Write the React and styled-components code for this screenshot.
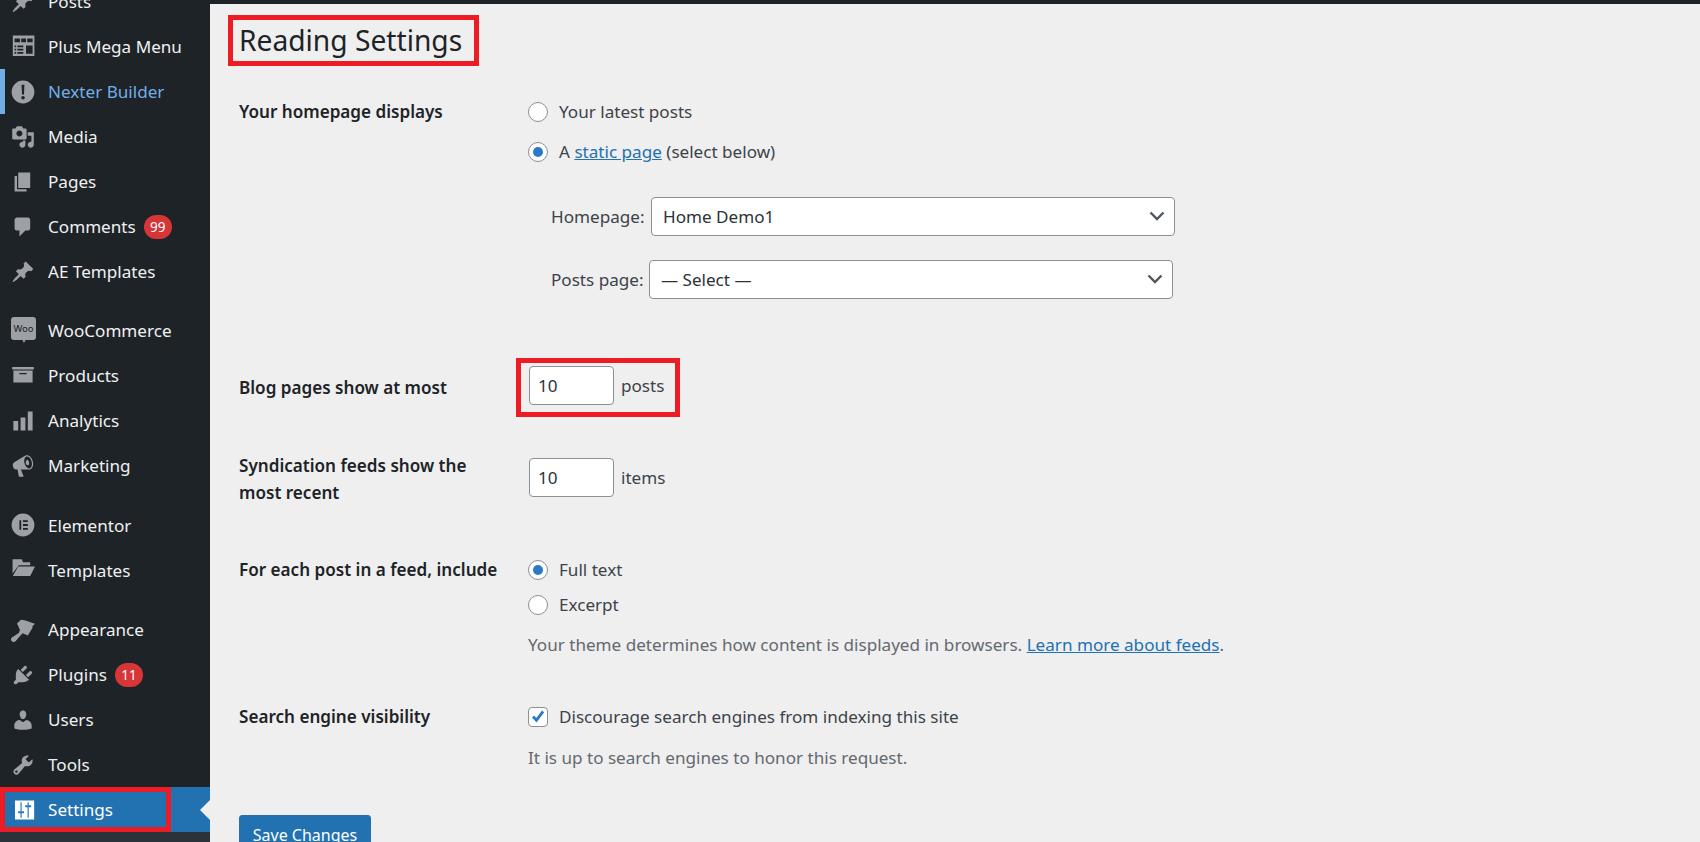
import React from 'react';
import styled, { createGlobalStyle } from 'styled-components';

const GlobalStyle = createGlobalStyle`
  html, body {
    margin: 0;
    height: 842px;
    overflow: hidden;
    background: #efefef;
    font-family: "Noto Sans", "Open Sans", sans-serif;
    font-size: 17.1px;
    color: #3c434a;
  }
`;

const ICONS = {
  post: <path d="M10.44 3.02l1.82-1.82 6.36 6.35-1.83 1.82c-1.05-.68-2.48-.57-3.41.36l-.75.75c-.92.93-1.04 2.35-.35 3.41l-1.83 1.82-2.41-2.41-2.8 2.79c-.42.42-3.38 2.71-3.8 2.29s1.86-3.39 2.28-3.81l2.79-2.79L4.1 9.36l1.83-1.82c1.05.69 2.48.57 3.4-.36l.75-.75c.93-.92 1.05-2.35.36-3.41z" />,
  mega: <path fillRule="evenodd" d="M1.500 0.500h18v17h-18v-17zM3 3v3h4.500V3H3zm5.500 0v3h4V3h-4zm5 0v3H18V3h-4.500zM3 8.800v1.400h1.300V8.800H3zm2.300 0v1.400h5V8.800h-5zM3 11.500v1.400h1.300v-1.400H3zm2.300 0v1.400h5v-1.400h-5zM3 14.200v1.400h1.300v-1.400H3zm2.300 0v1.400h5v-1.400h-5zM12.500 8.800v6.800H18V8.800h-5.500z" />,
  warning: <path fillRule="evenodd" d="M10 0.500a9.500 9.500 0 1 0 0 19 9.500 9.500 0 0 0 0-19zM8.800 4h2.400l-.4 8H9.200L8.800 4zM10 13.300a1.500 1.500 0 1 1 0 3 1.500 1.500 0 0 1 0-3z" />,
  media: <path d="M13 11V4c0-.55-.45-1-1-1h-1.670L9 1H5L3.670 3H2c-.55 0-1 .45-1 1v7c0 .55.45 1 1 1h10c.55 0 1-.45 1-1zM7 4.500c1.380 0 2.500 1.120 2.500 2.500S8.380 9.500 7 9.500 4.500 8.380 4.500 7 5.620 4.500 7 4.500zM14 6h5v10.500c0 1.380-1.120 2.500-2.500 2.500S14 17.880 14 16.500s1.120-2.500 2.500-2.500c.17 0 .34.02.5.05V9h-3V6zm-4 8.050V13h2v3.500c0 1.380-1.120 2.500-2.500 2.500S7 17.880 7 16.500 8.120 14 9.500 14c.17 0 .34.02.5.05z" />,
  page: <path d="M6 15V2h10v13H6zm-1 1h8v2H3V5h2v11z" />,
  comments: <path d="M5 2h9c1.100 0 2 .9 2 2v7c0 1.100-.9 2-2 2h-2l-5 5v-5H5c-1.100 0-2-.9-2-2V4c0-1.100.9-2 2-2z" />,
  products: <path fillRule="evenodd" d="M19 2.500v2H1v-2h18zM2 5.500h16v10H2v-10zm11 3v-1H7v1h6z" />,
  chart: <path d="M18 18V2h-4v16h4zm-6 0V7H8v11h4zm-6 0v-8H2v8h4z" />,
  megaphone: <path d="M18.150 5.940c.46 1.620.38 3.220-.02 4.480-.42 1.280-1.260 2.180-2.300 2.480-.16.06-.26.06-.4.06-.06.02-.12.02-.18.02-.06.02-.14.02-.22.02H8.230l2.220 5.500c.02.14-.06.26-.14.34-.08.1-.24.16-.34.16H6.950c-.1 0-.26-.06-.34-.16-.08-.08-.16-.2-.14-.34l-1-5.500H4.250l-.02-.02c-.5.06-1.080-.18-1.540-.62s-.88-1.080-1.060-1.880c-.24-.8-.2-1.560-.02-2.200.18-.62.58-1.080 1.060-1.300l.02-.02 9-5.400c.1-.06.18-.1.24-.16.06-.04.14-.08.24-.12.16-.08.28-.12.5-.18 1.040-.3 2.240.1 3.220 1 .98.88 1.800 2.240 2.260 3.860zm-2.580 5.980h-.02c.4-.1.74-.34 1.040-.7.58-.7.86-1.760.86-3.040 0-.64-.1-1.300-.28-1.980-.34-1.360-1.020-2.500-1.780-3.240s-1.680-1.100-2.460-.88c-.82.22-1.400.96-1.700 2-.32 1.040-.28 2.360.06 3.720.38 1.360 1 2.500 1.800 3.240.78.74 1.620 1.100 2.480.88zm-2.540-7.080c.22-.04.42-.02.62.04.38.16.76.48 1.020 1s.42 1.200.42 1.780c0 .3-.04.56-.12.8-.18.48-.44.84-.86.94-.34.1-.8-.06-1.140-.4-.26-.26-.48-.62-.58-1.080-.12-.46-.14-.94-.02-1.400.18-.7.5-1.140.84-1.280z" />,
  elementor: <path fillRule="evenodd" d="M10 0.500a9.500 9.500 0 1 0 0 19 9.500 9.500 0 0 0 0-19zM7 6h1.500v8H7V6zm3 0h4v1.500h-4V6zm0 3.250h4v1.500h-4v-1.500zm0 3.250h4V14h-4v-1.500z" />,
  folder: <path d="M1.300 1H9l1 2.500h6V6H6.500l-5.200 7V1zM6 7h14l-4 8H1.500L6 7z" />,
  appearance: <path d="M5 4.500L8.300 1.500c4 .2 7 2.200 11.700 3.200l-2.500 2.500.7.5L14 14.500 9.800 12.800 7.500 15l-3.500 4.200c-1 1-2.500 1-3.500 0-.9-1-.6-2.300.3-3L6.500 12.500l1-2.500L5 4.500z" />,
  plugins: <path d="M13.110 4.360L9.870 7.600 8 5.730l3.240-3.240c.35-.34 1.050-.2 1.560.32.52.51.66 1.210.31 1.550zm-8 1.770l.91-1.120 9.010 9.010-1.190.84c-.71.71-2.630 1.160-3.820 1.160H6.140L4.900 17.260c-.59.59-1.540.59-2.120 0-.59-.58-.59-1.530 0-2.120l1.240-1.240v-3.880c0-1.130.4-3.190 1.090-3.890zm7.260 3.970l3.240-3.240c.34-.35 1.040-.21 1.550.31.52.51.66 1.210.31 1.550l-3.240 3.250z" />,
  users: <path d="M10 9.250c-2.270 0-2.730-3.440-2.730-3.440C7 4.020 7.820 2 9.970 2c2.160 0 2.980 2.020 2.710 3.810 0 0-.41 3.440-2.680 3.440zm0 2.570L12.720 10c2.390 0 4.520 2.330 4.520 4.530v2.490s-3.650 1.130-7.240 1.130c-3.650 0-7.240-1.130-7.240-1.130v-2.490c0-2.250 1.940-4.480 4.470-4.480z" />,
  tools: <path d="M16.680 9.770c-1.340 1.340-3.300 1.670-4.950.99l-5.410 6.520c-.99.99-2.590.99-3.580 0s-.99-2.590 0-3.570l6.520-5.420c-.68-1.650-.35-3.610.99-4.950 1.280-1.280 3.120-1.620 4.720-1.060l-2.890 2.890 2.820 2.820 2.860-2.870c.53 1.580.18 3.390-1.080 4.650zM3.810 16.210c.4.39 1.040.39 1.430 0 .4-.4.4-1.040 0-1.430-.39-.4-1.030-.4-1.430 0-.39.39-.39 1.030 0 1.430z" />,
  settings: (
    <>
      <path d="M3.300 2h16v16h-16z" />
      <path fill="#2a7bc4" d="M7.900 3.500h1v13h-1zM5.900 11h5v1.800h-5zM13.800 3.500h1v13h-1zM11.800 6h5v1.800h-5z" />
    </>
  ),
};

const WooIcon = () => (
  <svg width="25" height="27" viewBox="0 0 25 27">
    <path fill="currentColor" d="M3 0h19a3 3 0 0 1 3 3v17a3 3 0 0 1-3 3h-7.500l-1.500 3-1.500-3H3a3 3 0 0 1-3-3V3a3 3 0 0 1 3-3z" />
    <text x="12.500" y="15" textAnchor="middle" fontSize="9.500" fontFamily="Noto Sans, sans-serif" fill="#1d2327">Woo</text>
  </svg>
);

const MENU = [
  { label: 'Posts', icon: 'post' },
  { label: 'Plus Mega Menu', icon: 'mega' },
  { label: 'Nexter Builder', icon: 'warning', current: true },
  { label: 'Media', icon: 'media' },
  { label: 'Pages', icon: 'page' },
  { label: 'Comments', icon: 'comments', badge: 99 },
  { label: 'AE Templates', icon: 'post', gapAfter: true },
  { label: 'WooCommerce', icon: 'woo' },
  { label: 'Products', icon: 'products' },
  { label: 'Analytics', icon: 'chart' },
  { label: 'Marketing', icon: 'megaphone', gapAfter: true },
  { label: 'Elementor', icon: 'elementor' },
  { label: 'Templates', icon: 'folder', gapAfter: true },
  { label: 'Appearance', icon: 'appearance' },
  { label: 'Plugins', icon: 'plugins', badge: 11 },
  { label: 'Users', icon: 'users' },
  { label: 'Tools', icon: 'tools' },
  { label: 'Settings', icon: 'settings', active: true },
];

const Page = styled.div`
  display: flex;
  height: 842px;
  overflow: hidden;
`;

const Sidebar = styled.nav`
  width: 210px;
  flex: none;
  height: 842px;
  overflow: hidden;
  background: #1d2327;
  display: flex;
  flex-direction: column;
`;

const Menu = styled.ul`
  list-style: none;
  margin: -21px 0 0;
  padding: 0;
`;

const MenuItem = styled.li`
  position: relative;
  height: 45px;
  display: flex;
  align-items: center;
  margin-bottom: ${p => (p.$gapAfter ? '14.4px' : '0')};
  background: ${p => (p.$active ? '#2271b1' : 'transparent')};
  color: ${p => (p.$current ? '#72aee6' : p.$active ? '#fff' : '#f0f0f1')};
  box-shadow: ${p => (p.$current ? 'inset 5px 0 0 #72aee6' : 'none')};
`;

const IconSlot = styled.span`
  width: 48px;
  flex: none;
  display: flex;
  justify-content: center;
  padding-right: 2px;
  box-sizing: border-box;
  color: ${p => (p.$active ? '#fff' : '#9da1a6')};
  svg { display: block; overflow: visible; }
`;

const MenuLabel = styled.span`
  white-space: nowrap;
`;

const Badge = styled.span`
  margin-left: 8px;
  min-width: 28px;
  height: 24px;
  border-radius: 12px;
  background: #d63638;
  color: #fff;
  font-size: 13.500px;
  line-height: 24px;
  text-align: center;
`;

const ActiveFrame = styled.span`
  position: absolute;
  left: 0;
  top: 0;
  width: 171px;
  height: 45px;
  box-sizing: border-box;
  border: 5px solid #ed1c24;
`;

const ActiveArrow = styled.span`
  position: absolute;
  right: 0;
  top: 50%;
  margin-top: -10px;
  border: 10px solid transparent;
  border-left: 0;
  border-right-color: #f0f0f1;
`;

const SubmenuFill = styled.div`
  flex: 1;
  background: #2c3338;
`;

const Main = styled.main`
  flex: 1;
  border-top: 4px solid #1d2327;
  padding: 11px 0 0 18px;
`;

const TitleFrame = styled.div`
  display: inline-block;
  vertical-align: top;
  box-sizing: border-box;
  width: 251px;
  height: 51px;
  border: 5px solid #ed1c24;
  padding-left: 6px;
`;

const Title = styled.h1`
  margin: 0;
  font-size: 28.200px;
  font-weight: 400;
  line-height: 41px;
  color: #1d2327;
  white-space: nowrap;
`;

const Form = styled.form`
  padding-left: 11px;
  margin: 0;
`;

const Row = styled.div`
  display: grid;
  grid-template-columns: 289px 1fr;
  margin-top: ${p => p.$top}px;
`;

const RowLabel = styled.div`
  font-weight: 600;
  color: #1d2327;
  line-height: 27px;
  max-width: 272px;
  padding-top: ${p => p.$pad || 0}px;
`;

const Option = styled.label`
  display: flex;
  align-items: center;
  gap: 11px;
  height: 27px;
  margin-top: ${p => p.$top || 0}px;
`;

const Radio = styled.span`
  width: 20px;
  height: 20px;
  flex: none;
  box-sizing: border-box;
  border: 1px solid #8c8f94;
  border-radius: 50%;
  background: #fff;
  display: flex;
  align-items: center;
  justify-content: center;
  &::before {
    content: "";
    width: 10px;
    height: 10px;
    border-radius: 50%;
    background: ${p => (p.$checked ? '#2a7bc4' : 'transparent')};
  }
`;

const CheckBox = styled.span`
  width: 20px;
  height: 20px;
  flex: none;
  box-sizing: border-box;
  border: 1px solid #8c8f94;
  border-radius: 4px;
  background: #fff;
  display: flex;
  align-items: center;
  justify-content: center;
  color: #2a7bc4;
`;

const Link = styled.a`
  color: #2271b1;
  text-decoration: underline;
`;

const SelectLine = styled.div`
  display: flex;
  align-items: center;
  gap: 6px;
  margin-top: ${p => p.$top}px;
  padding-left: 23px;
`;

const SelectLabel = styled.label`
  width: ${p => p.$width}px;
  white-space: nowrap;
`;

const SelectWrap = styled.div`
  position: relative;
  width: 524px;
  height: 39px;
  svg {
    position: absolute;
    right: 9px;
    top: 12px;
    color: #50575e;
    pointer-events: none;
  }
`;

const Select = styled.select`
  appearance: none;
  width: 100%;
  height: 100%;
  box-sizing: border-box;
  padding: 0 30px 0 11px;
  border: 1px solid #8c8f94;
  border-radius: 4px;
  background: #fff;
  font: inherit;
  color: #2c3338;
`;

const NumberLine = styled.div`
  display: flex;
  align-items: center;
  align-self: start;
  gap: 7px;
  margin-top: ${p => p.$top || 0}px;
  padding-left: ${p => p.$left || 0}px;
`;

const NumberFrame = styled(NumberLine)`
  width: 164px;
  height: 59px;
  box-sizing: border-box;
  margin-left: -12px;
  padding-left: 8px;
  padding-bottom: 4px;
  border: 5px solid #ed1c24;
`;

const NumberInput = styled.input`
  width: 85px;
  height: 39px;
  box-sizing: border-box;
  padding: 0 8px;
  border: 1px solid #8c8f94;
  border-radius: 4px;
  background: #fff;
  font: inherit;
  color: #2c3338;
`;

const Description = styled.p`
  margin: ${p => p.$top}px 0 0;
  line-height: 22px;
  color: #646970;
  white-space: nowrap;
`;

const SaveButton = styled.button`
  display: block;
  width: 132px;
  height: 40px;
  margin: 46px 0 0 11px;
  padding: 0;
  border: 1px solid #2271b1;
  border-radius: 3px;
  background: #2271b1;
  color: #fff;
  font-family: inherit;
  font-size: 16px;
`;

const Chevron = () => (
  <svg width="18" height="14" viewBox="0 0 18 14" fill="none" stroke="currentColor" strokeWidth="2.400">
    <path d="M2.500 3.500L9 10l6.500-6.500" />
  </svg>
);

function App() {
  return (
    <Page>
      <GlobalStyle />
      <Sidebar>
        <Menu>
          {MENU.map(item => (
            <MenuItem key={item.label} $gapAfter={item.gapAfter} $current={item.current} $active={item.active}>
              <IconSlot $active={item.active}>
                {item.icon === 'woo' ? (
                  <WooIcon />
                ) : (
                  <svg width="24" height="24" viewBox="0 0 20 20" fill="currentColor">{ICONS[item.icon]}</svg>
                )}
              </IconSlot>
              <MenuLabel>{item.label}</MenuLabel>
              {item.badge && <Badge>{item.badge}</Badge>}
              {item.active && <ActiveFrame />}
              {item.active && <ActiveArrow />}
            </MenuItem>
          ))}
        </Menu>
        <SubmenuFill />
      </Sidebar>
      <Main>
        <TitleFrame>
          <Title>Reading Settings</Title>
        </TitleFrame>
        <Form>
          <Row $top={32}>
            <RowLabel>Your homepage displays</RowLabel>
            <div>
              <Option><Radio />Your latest posts</Option>
              <Option $top={13}><Radio $checked /><span>A <Link href="#">static page</Link> (select below)</span></Option>
              <SelectLine $top={32}>
                <SelectLabel $width={94}>Homepage:</SelectLabel>
                <SelectWrap>
                  <Select defaultValue="home"><option value="home">Home Demo1</option></Select>
                  <Chevron />
                </SelectWrap>
              </SelectLine>
              <SelectLine $top={24}>
                <SelectLabel $width={92}>Posts page:</SelectLabel>
                <SelectWrap>
                  <Select defaultValue="none"><option value="none">— Select —</option></Select>
                  <Chevron />
                </SelectWrap>
              </SelectLine>
            </div>
          </Row>
          <Row $top={59}>
            <RowLabel $pad={16}>Blog pages show at most</RowLabel>
            <NumberFrame>
              <NumberInput defaultValue="10" />
              posts
            </NumberFrame>
          </Row>
          <Row $top={35}>
            <RowLabel>Syndication feeds show the most recent</RowLabel>
            <NumberLine $top={6} $left={1}>
              <NumberInput defaultValue="10" />
              items
            </NumberLine>
          </Row>
          <Row $top={50}>
            <RowLabel>For each post in a feed, include</RowLabel>
            <div>
              <Option><Radio $checked />Full text</Option>
              <Option $top={8}><Radio />Excerpt</Option>
              <Description $top={16}>Your theme determines how content is displayed in browsers. <Link href="#">Learn more about feeds</Link>.</Description>
            </div>
          </Row>
          <Row $top={47}>
            <RowLabel>Search engine visibility</RowLabel>
            <div>
              <Option>
                <CheckBox>
                  <svg width="16" height="16" viewBox="0 0 16 16" fill="currentColor"><path d="M6.500 13.500L2 8.600l2-2 2.300 2.500L12 1.500l2.200 1.700z" /></svg>
                </CheckBox>
                Discourage search engines from indexing this site
              </Option>
              <Description $top={17}>It is up to search engines to honor this request.</Description>
            </div>
          </Row>
        </Form>
        <SaveButton type="button">Save Changes</SaveButton>
      </Main>
    </Page>
  );
}

export default App;
